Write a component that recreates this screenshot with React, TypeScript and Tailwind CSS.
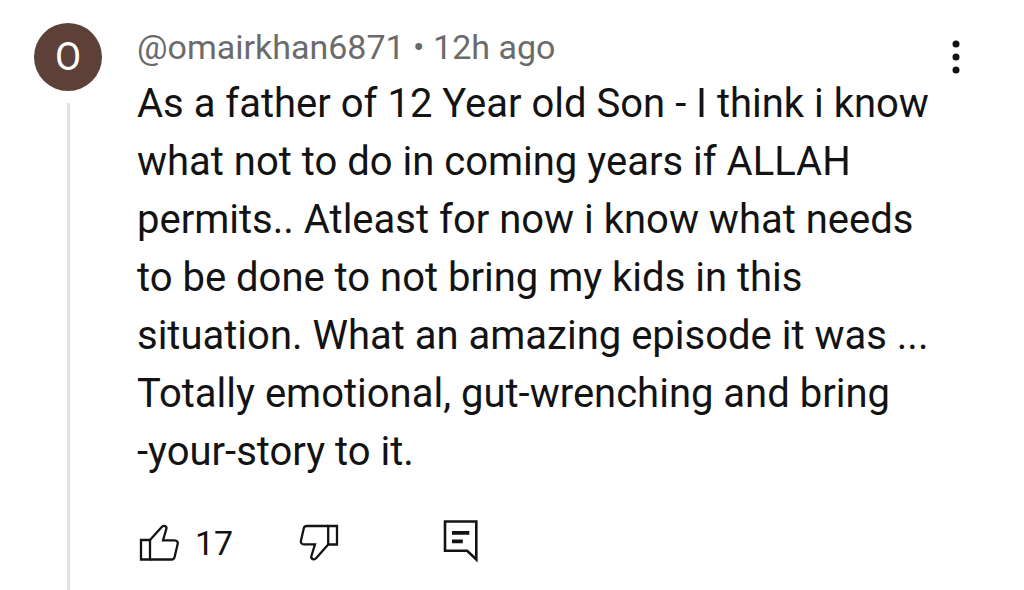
import React from "react";

const lines = [
  "As a father of 12 Year old Son - I think i know",
  "what not to do in coming years if ALLAH",
  "permits.. Atleast for now i know what needs",
  "to be done to not bring my kids in this",
  "situation. What an amazing episode it was ...",
  "Totally emotional, gut-wrenching and bring",
  "-your-story to it.",
];

function LikeIcon() {
  return (
    <svg width="42" height="38" viewBox="0 0 42 38" fill="none" stroke="currentColor" strokeWidth="2.3">
      <path d="M4 16H13V35.5H4Z" />
      <path d="M13 16L24.5 3.2C26.6 .8 30.2 2 29.3 5L26 16.3H37.5C40 16.3 41.2 18 40.6 20.2L37.6 33C37.2 34.8 36.4 35.5 34.5 35.5H13" />
    </svg>
  );
}

function DislikeIcon() {
  return (
    <svg width="42" height="38" viewBox="0 0 42 38" fill="none" stroke="currentColor" strokeWidth="2.3">
      <path d="M29.2 2H38V20.5H29.2Z" />
      <path d="M29.2 2H8C6.2 2 5.2 2.6 4.8 4.3L2 16.5C1.4 19 2.6 20.4 5 20.4H16L12.4 32C11.5 35.2 15.2 36.4 17.3 34L29.2 20.5" />
    </svg>
  );
}

function CommentIcon() {
  return (
    <svg width="36" height="46" viewBox="0 0 36 46" fill="none" stroke="currentColor" strokeWidth="2.6">
      <path d="M3 1.5H34.3V39.5L25.2 30.8H3Z" />
      <path d="M10 12.8H27.3M10 21.3H20.8" strokeWidth="3.8" />
    </svg>
  );
}

export default function App() {
  return (
    <article className="flex min-h-screen bg-white pl-[34px] pr-14 font-[Roboto,sans-serif] text-[#131313]">
      <div className="flex w-[68px] shrink-0 flex-col items-center gap-3 pt-[23px]">
        <div className="flex size-[68px] items-center justify-center rounded-full bg-[#5d4038] text-[38px] text-white">O</div>
        <div className="w-[3px] flex-1 bg-[#e2e2e2]" />
      </div>

      <div className="min-w-0 flex-1 pl-[35px] pt-[25px]">
        <header className="flex h-[50px] items-start justify-between">
          <p className="text-[34px] leading-[44px] text-[#6b6b6b]">@omairkhan6871 • 12h ago</p>
          <button aria-label="More options" className="mt-[15px] flex w-6 justify-center">
            <svg width="8" height="34" viewBox="0 0 8 34" fill="currentColor">
              <circle cx="4" cy="4" r="3.5" />
              <circle cx="4" cy="17" r="3.5" />
              <circle cx="4" cy="30" r="3.5" />
            </svg>
          </button>
        </header>

        <p className="whitespace-pre-line text-[40px] leading-[58px]">{lines.join("\n")}</p>

        <footer className="mt-[39px] flex items-center">
          <button aria-label="Like" className="flex items-center gap-4 text-[34px] leading-[44px]">
            <LikeIcon />
            17
          </button>
          <button aria-label="Dislike" className="ml-[66px]">
            <DislikeIcon />
          </button>
          <button aria-label="Reply" className="ml-[101px]">
            <CommentIcon />
          </button>
        </footer>
      </div>
    </article>
  );
}
